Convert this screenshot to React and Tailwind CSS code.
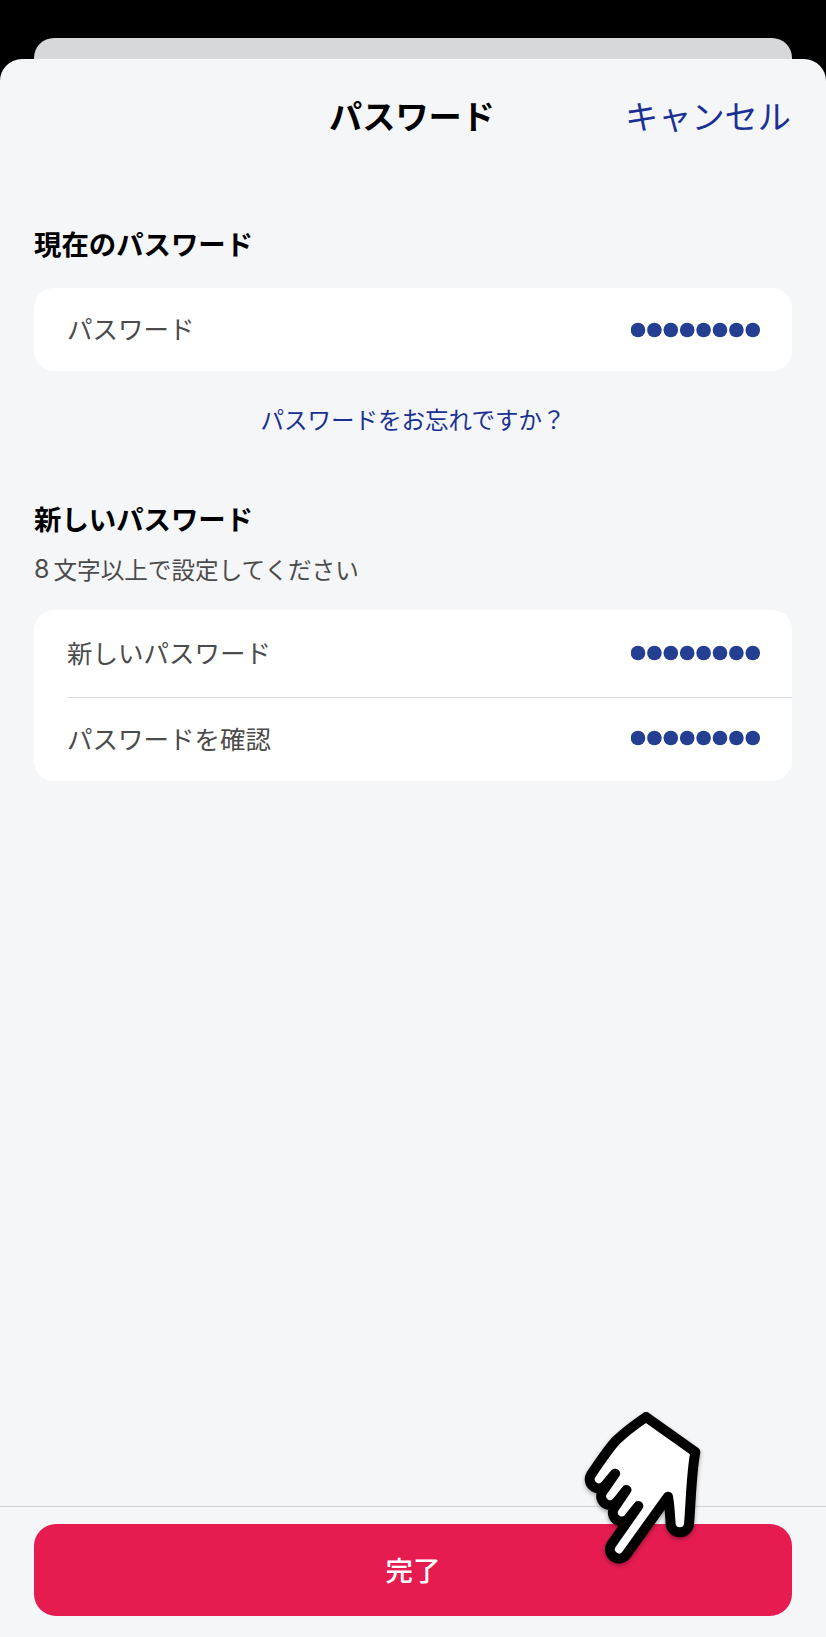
import React from "react";

const DOTS = [0, 1, 2, 3, 4, 5, 6, 7];

function Dots() {
  return (
    <svg viewBox="0 0 130 16" className="w-[130px] h-[16px] fill-[#243f91]" aria-label="password">
      {DOTS.map((i) => (
        <circle key={i} cx={7 + i * 16.4} cy="8" r="7.3" />
      ))}
    </svg>
  );
}

function HandPointer() {
  return (
    <svg
      viewBox="0 0 450 540"
      className="absolute left-[570px] top-[1400px] w-[150px] h-[180px] drop-shadow-[0_2px_2px_rgba(0,0,0,0.35)]"
    >
      <path
        d="M228 51 C196 73 160 100 136 124 C112 150 88 188 63 224
           A27 27 0 0 0 107 255 L135 221
           L96 277 A27 27 0 0 0 140 307 L169 270
           L131 326 A27 27 0 0 0 175 356 L205 318
           L125 432 A27 27 0 0 0 169 464 L294 290
           C299 316 300 346 302 374 A28 28 0 0 0 357 374
           C363 300 364 220 376 156 Z"
        fill="#fff"
        stroke="#000"
        strokeWidth="30"
        strokeLinejoin="round"
        strokeLinecap="round"
      />
    </svg>
  );
}

export default function App() {
  return (
    <div className="relative w-[826px] h-[1637px] bg-black overflow-hidden flex flex-col pt-[37.5px] font-['Noto_Sans_CJK_JP',sans-serif]">
      {/* Page behind the sheet */}
      <div className="h-[44px] mx-[34px] rounded-t-[20px] bg-[#d7d8da] shrink-0" />

      {/* Sheet */}
      <div className="-mt-[23px] flex-1 flex flex-col rounded-t-[22px] bg-[#f5f6f8]">
        {/* Header */}
        <header className="grid grid-cols-[1fr_auto_1fr] items-center h-[113px] pl-[33px] pr-[35px]">
          <span />
          <h1 className="text-[33.2px] leading-none font-bold text-black">パスワード</h1>
          <button className="justify-self-end text-[33.2px] leading-none text-[#1a3193]">キャンセル</button>
        </header>

        <main className="flex-1 px-[34px] pt-[57px]">
          {/* Current password */}
          <h2 className="text-[27.4px] leading-[28px] font-bold text-black">現在のパスワード</h2>
          <div className="mt-[31px] h-[83px] pl-[33px] pr-[31px] flex items-center justify-between bg-white rounded-[20px]">
            <label className="pb-[3px] text-[25.5px] leading-none text-[#4b4b4b]">パスワード</label>
            <div className="pt-[2px]">
              <Dots />
            </div>
          </div>
          <a className="block mt-[36px] text-center text-[23.5px] leading-[24px] text-[#1a3193]">
            パスワードをお忘れですか？
          </a>

          {/* New password */}
          <h2 className="mt-[73px] text-[27.4px] leading-[28px] font-bold text-black">新しいパスワード</h2>
          <p className="mt-[25px] flex text-[23.6px] leading-[24px] text-[#4b4b4b]">
            <span className="w-[19.5px] text-[25px] font-['Inter']">8</span>文字以上で設定してください
          </p>
          <div className="mt-[29.5px] h-[171px] pl-[33px] bg-white rounded-[20px]">
            <div className="h-[87.5px] pr-[31px] flex items-center justify-between border-b-[1.5px] border-[#dcdcde]">
              <label className="pb-[3px] text-[25.5px] leading-none text-[#4b4b4b]">新しいパスワード</label>
              <div className="pb-px">
                <Dots />
              </div>
            </div>
            <div className="h-[81px] pr-[31px] flex items-center justify-between">
              <label className="pb-px text-[25.5px] leading-none text-[#4b4b4b]">パスワードを確認</label>
              <div className="pb-px">
                <Dots />
              </div>
            </div>
          </div>
        </main>

        {/* Footer */}
        <footer className="h-[131px] border-t border-[#d0d1d3] px-[34px] pt-[16.5px]">
          <button className="w-full h-[92px] rounded-[22px] bg-[#e61c51] text-white text-[27.5px] leading-none font-medium">
            完了
          </button>
        </footer>
      </div>

      <HandPointer />
    </div>
  );
}
